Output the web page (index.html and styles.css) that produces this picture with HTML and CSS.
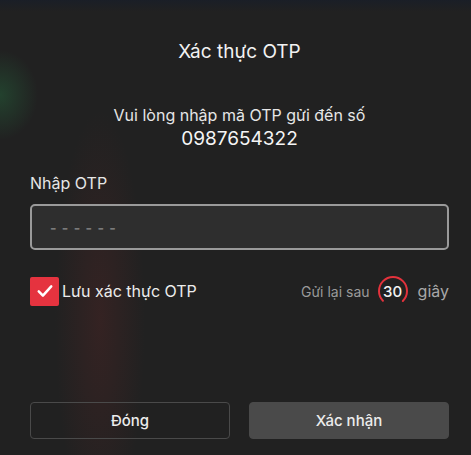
FILE: index.html
```html
<!DOCTYPE html>
<html lang="vi">
<head>
    <meta charset="UTF-8">
    <meta name="viewport" content="width=device-width, initial-scale=1.0">
    <title>Xác thực OTP</title>
    <link rel="stylesheet" href="styles.css">
</head>
<body>
    <div class="sheet">
        <h1 class="title">Xác thực OTP</h1>
        <p class="notice">
            Vui lòng nhập mã OTP gửi đến số
            <span class="phone">0987654322</span>
        </p>

        <label class="field-label" for="otpInput">Nhập OTP</label>
        <input type="text" id="otpInput" class="otp-input" placeholder="- - - - - -" maxlength="6">

        <div class="options">
            <label class="remember">
                <input type="checkbox" checked>
                <span class="box">
                    <svg viewBox="0 0 24 24" width="20" height="20">
                        <path d="M4.5 12.5 L9.5 17.5 L19.5 6.5" fill="none" stroke="#fff" stroke-width="3" stroke-linecap="round" stroke-linejoin="round"/>
                    </svg>
                </span>
                Lưu xác thực OTP
            </label>
            <div class="resend">
                <span class="resend-text">Gửi lại sau</span>
                <span class="timer">
                    <svg viewBox="0 0 32 32" width="32" height="32">
                        <circle cx="16" cy="16" r="14" fill="none" stroke="#e3323c" stroke-width="2" stroke-dasharray="66 22" stroke-dashoffset="-33" stroke-linecap="round"/>
                    </svg>
                    <span class="count">30</span>
                </span>
                <span class="unit">giây</span>
            </div>
        </div>

        <div class="actions">
            <button type="button" class="btn btn-close">Đóng</button>
            <button type="button" class="btn btn-confirm">Xác nhận</button>
        </div>
    </div>
</body>
</html>
```

FILE: styles.css
```css
html, body {
    height: 100%;
}

body {
    margin: 0;
    font-family: Inter, "Noto Sans", sans-serif;
    color: #f2f2f2;
    background-color: #212121;
    background-image:
        radial-gradient(ellipse 38px 45px at 0 95px, rgba(40, 150, 80, 0.28), transparent),
        radial-gradient(ellipse 45px 210px at 100px 320px, rgba(115, 40, 40, 0.24), transparent),
        linear-gradient(180deg, rgba(20, 28, 45, 0.5) 0, rgba(33, 33, 33, 0) 12px);
}

.sheet {
    box-sizing: border-box;
    height: 100%;
    padding: 40px 22px 16px 30px;
    display: flex;
    flex-direction: column;
}

.title {
    margin: 0;
    font-size: 19px;
    font-weight: 400;
    line-height: 24px;
    text-align: center;
}

.notice {
    margin: 39px 0 0;
    font-size: 16px;
    line-height: 24px;
    text-align: center;
    color: #e6e6e6;
}

.phone {
    display: block;
    font-size: 19px;
    font-weight: 400;
    color: #f5f5f5;
}

.field-label {
    margin-top: 22px;
    font-size: 16px;
    line-height: 20px;
    color: #e6e6e6;
}

.otp-input {
    margin-top: 11px;
    height: 46px;
    box-sizing: border-box;
    padding: 0 18px;
    border: 2px solid #9a9a9a;
    border-radius: 5px;
    background: #2e2e2e;
    color: #f2f2f2;
    font-family: inherit;
    font-size: 14px;
    letter-spacing: 1px;
    outline: none;
}

.otp-input::placeholder {
    color: #7a7a7a;
    font-weight: 700;
}

.options {
    margin-top: 25px;
    display: flex;
    justify-content: space-between;
    align-items: center;
}

.remember {
    display: flex;
    align-items: center;
    gap: 3px;
    font-size: 16px;
    color: #ececec;
}

.remember input {
    display: none;
}

.box {
    width: 29px;
    height: 29px;
    border-radius: 2px;
    background-color: #e5333f;
    display: flex;
    justify-content: center;
    align-items: center;
}

.resend {
    display: flex;
    align-items: center;
    font-size: 14px;
    color: #9a9a9a;
}

.timer {
    position: relative;
    width: 32px;
    height: 32px;
    margin: 0 9px 0 7px;
    display: flex;
    justify-content: center;
    align-items: center;
}

.timer svg {
    position: absolute;
    top: 0;
    left: 0;
}

.count {
    font-size: 15px;
    font-weight: 500;
    color: #f2f2f2;
}

.unit {
    font-size: 16px;
    color: #a8a8a8;
}

.actions {
    margin-top: auto;
    display: grid;
    grid-template-columns: 1fr 1fr;
    gap: 19px;
}

.btn {
    height: 37px;
    border-radius: 4px;
    font-family: inherit;
    font-size: 15px;
    font-weight: 500;
    color: #ececec;
    cursor: pointer;
}

.btn-close {
    background: transparent;
    border: 1px solid #4a4a4a;
}

.btn-confirm {
    background: #4a4a4a;
    border: 1px solid #4a4a4a;
}
```
